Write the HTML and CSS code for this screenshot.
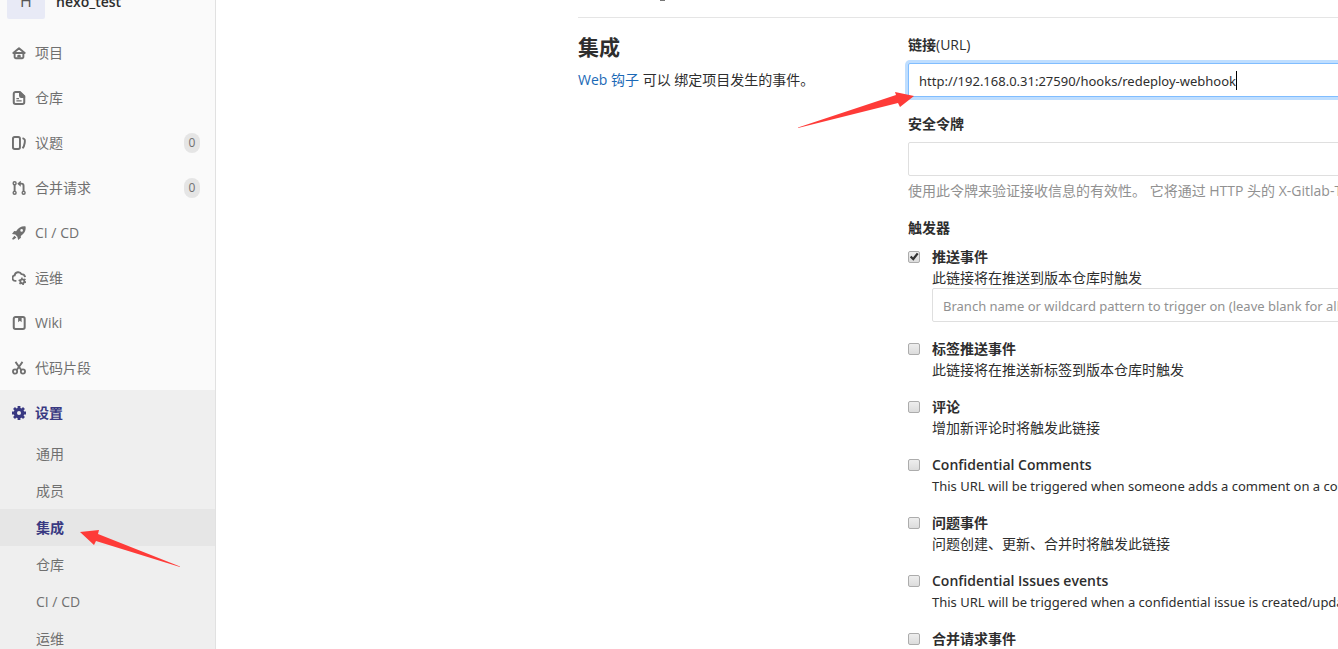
FILE: index.html
```html
<!DOCTYPE html>
<html lang="zh-CN">
<head>
<meta charset="utf-8">
<title>集成 · hexo_test</title>
<link rel="stylesheet" href="styles.css">
</head>
<body>
<div class="page">
  <aside class="sidebar">
    <header class="project"><span class="avatar">H</span><a class="project-name" href="#">hexo_test</a></header>
    <nav>
      <ul class="nav">
        <li><a href="#"><svg class="icon" viewBox="0 0 16 16"><path d="M1.500 8L8 2.500 14.500 8z" fill="none" stroke="currentColor" stroke-width="2.200" stroke-linejoin="round"/><path d="M3 8v4.500A1.500 1.500 0 0 0 4.500 14h7a1.500 1.500 0 0 0 1.500-1.500V8" fill="none" stroke="currentColor" stroke-width="2.200"/><path d="M6 13v-1.500A1.500 1.500 0 0 1 7.500 10h1a1.500 1.500 0 0 1 1.500 1.500V13z"/></svg><span>项目</span></a></li>
        <li><a href="#"><svg class="icon" viewBox="0 0 16 16"><path d="M9 1.200H4A2 2 0 0 0 2 3.200v9.600a2 2 0 0 0 2 2h8a2 2 0 0 0 2-2V6z" fill="none" stroke="currentColor" stroke-width="2.300"/><path d="M8 1h2l5 5v2h-4.500A2.500 2.500 0 0 1 8 5.500zM5 8h3v1.300H5zM5 10.700h6V12H5z"/></svg><span>仓库</span></a></li>
        <li><a href="#"><svg class="icon" viewBox="0 0 16 16"><rect x="1.100" y="1.200" width="8" height="13.600" rx="2" fill="none" stroke="currentColor" stroke-width="2.200"/><path d="M12 2.500c2.800 1 3 1.800 2.500 5.500S13.300 12.700 12 14" fill="none" stroke="currentColor" stroke-width="2.200"/></svg><span>议题</span><span class="count">0</span></a></li>
        <li><a href="#"><svg class="icon" viewBox="0 0 16 16"><g fill="none" stroke="currentColor"><g stroke-width="1.600"><circle cx="3" cy="2.500" r="1.700"/><circle cx="3" cy="13.500" r="1.700"/><circle cx="13.300" cy="13.500" r="1.700"/></g><path d="M3 4.200v7.600M8 3h2.800a2.400 2.400 0 0 1 2.400 2.400v6.400" stroke-width="2.200"/></g><path d="M6 3l4-3.500v7z"/></svg><span>合并请求</span><span class="count">0</span></a></li>
        <li><a href="#"><svg class="icon" viewBox="0 0 16 16"><path fill-rule="evenodd" d="M15.500.500c.5 4-.5 7-4.500 10l-1 .8.200 2.200L7 16l-.8-3.800-2.400-2.400L0 9l2.500-3.200 2.200.2C7.500 2 11 0 15.500.500zM11 3.500a1.500 1.500 0 1 0 0 3 1.500 1.500 0 0 0 0-3z"/><path d="M2.800 11l2.200 2.200L2 15.500H.5V14z"/></svg><span>CI / CD</span></a></li>
        <li><a href="#"><svg class="icon" viewBox="0 0 16 16"><path d="M5 11.300H4A3.200 3.200 0 0 1 3 5C3.600.800 9 .1 10.800 3.600 13 3.600 14.500 4.800 15 7" fill="none" stroke="currentColor" stroke-width="2.200"/><circle cx="11.800" cy="11.800" r="2.300" fill="none" stroke="currentColor" stroke-width="2"/><circle cx="11.800" cy="11.800" r="3.600" fill="none" stroke="currentColor" stroke-width="1.800" stroke-dasharray="1.800 1.970"/></svg><span>运维</span></a></li>
        <li><a href="#"><svg class="icon" viewBox="0 0 16 16"><rect x="2" y="1.200" width="12.500" height="13.600" rx="2" fill="none" stroke="currentColor" stroke-width="2.300"/><path d="M7 1h4v6L9 5.500 7 7z"/></svg><span>Wiki</span></a></li>
        <li><a href="#"><svg class="icon" viewBox="0 0 16 16"><g fill="none" stroke="currentColor" stroke-width="2.100"><circle cx="3.500" cy="12" r="2.400"/><circle cx="12.500" cy="12" r="2.400"/><path d="M4 1l6.800 9.500M12 1L5.200 10.500"/></g></svg><span>代码片段</span></a></li>
      </ul>
      <div class="nav-active">
        <ul class="nav">
          <li><a class="current" href="#"><svg class="icon" viewBox="0 0 16 16"><circle cx="8" cy="8" r="4.200" fill="none" stroke="currentColor" stroke-width="3.800"/><path fill="none" stroke="currentColor" stroke-width="3.200" d="M8 0v3.500M8 12.500V16M0 8h3.500M12.500 8H16M2.300 2.300L5 5M11 11l2.700 2.700M2.300 13.700L5 11M11 5l2.700-2.700"/></svg><span>设置</span></a></li>
        </ul>
        <ul class="subnav">
          <li><a href="#">通用</a></li>
          <li><a href="#">成员</a></li>
          <li><a class="current" href="#">集成</a></li>
          <li><a href="#">仓库</a></li>
          <li><a href="#">CI / CD</a></li>
          <li><a href="#">运维</a></li>
        </ul>
      </div>
    </nav>
  </aside>
  <main class="content">
    <section class="settings">
      <div class="intro">
        <h4>集成</h4>
        <p><a href="#">Web 钩子</a> 可以 绑定项目发生的事件。</p>
      </div>
      <form class="form">
        <div class="group">
          <label for="url">链接<span class="plain">(URL)</span></label>
          <div class="field"><input class="control focused" id="url" type="text" value="http://192.168.0.31:27590/hooks/redeploy-webhook"><span class="caret"></span></div>
        </div>
        <div class="group">
          <label for="token">安全令牌</label>
          <input class="control" id="token" type="text">
          <p class="help">使用此令牌来验证接收信息的有效性。 它将通过 HTTP 头的 X-Gitlab-Token 发送。</p>
        </div>
        <fieldset class="triggers">
          <legend>触发器</legend>
          <div class="trigger"><input type="checkbox" id="push" checked><div><label for="push">推送事件</label><p>此链接将在推送到版本仓库时触发</p><input class="control" type="text" aria-label="Branch" placeholder="Branch name or wildcard pattern to trigger on (leave blank for all)"></div></div>
          <div class="trigger"><input type="checkbox" id="tag"><div><label for="tag">标签推送事件</label><p>此链接将在推送新标签到版本仓库时触发</p></div></div>
          <div class="trigger"><input type="checkbox" id="note"><div><label for="note">评论</label><p>增加新评论时将触发此链接</p></div></div>
          <div class="trigger"><input type="checkbox" id="cnote"><div><label for="cnote">Confidential Comments</label><p class="latin">This URL will be triggered when someone adds a comment on a confidential issue</p></div></div>
          <div class="trigger"><input type="checkbox" id="issue"><div><label for="issue">问题事件</label><p>问题创建、更新、合并时将触发此链接</p></div></div>
          <div class="trigger"><input type="checkbox" id="cissue"><div><label for="cissue">Confidential Issues events</label><p class="latin">This URL will be triggered when a confidential issue is created/updated/merged</p></div></div>
          <div class="trigger"><input type="checkbox" id="merge"><div><label for="merge">合并请求事件</label></div></div>
        </fieldset>
      </form>
    </section>
  </main>
  <svg class="arrow arrow-url" viewBox="0 0 116 36"><path d="M116 4L97 0l1 3L0 35.500v.5l100-25 2 4z"/></svg>
  <svg class="arrow arrow-nav" viewBox="0 0 100 37"><path d="M0 2L19 0l-1 4 82 32.500v.5L16 11l-2 4z"/></svg>
</div>
</body>
</html>
```
FILE: styles.css
```css
* { box-sizing: border-box; }
body {
  margin: 0;
  background: #fff;
  color: #2e2e2e;
  font: 14px/21px "Open Sans", "Noto Sans CJK SC", sans-serif;
}
a { color: #1b69b6; text-decoration: none; }
p, h4, ul, fieldset { margin: 0; padding: 0; }
ul { list-style: none; }
.page {
  position: relative;
  display: flex;
  height: 100vh;
  overflow: hidden;
}
.sidebar {
  flex: 0 0 216px;
  background: #fafafa;
  border-right: 1px solid #e1e1e1;
}
.project {
  display: flex;
  align-items: center;
  gap: 11px;
  height: 40px;
  margin: -20px 0 10px;
  padding-left: 7px;
}
.avatar {
  width: 38px;
  height: 38px;
  border-radius: 2px;
  background: #e8eaf6;
  color: #555;
  font-size: 16px;
  line-height: 40px;
  text-align: center;
}
.project-name { padding-top: 3px; color: #2e2e2e; font-weight: 600; }
.nav a {
  display: flex;
  align-items: center;
  height: 45px;
  padding: 0 15px 0 12px;
  color: #707070;
}
.icon { width: 14px; height: 14px; margin-right: 9px; fill: currentColor; }
.count {
  width: 16px;
  height: 20px;
  margin-left: auto;
  border-radius: 8px;
  background: #e5e5e5;
  font-size: 12px;
  line-height: 20px;
  text-align: center;
}
.nav-active { background: #efefef; }
.nav a.current { color: #393982; font-weight: 600; }
.subnav a {
  display: block;
  padding-left: 36px;
  color: #707070;
  line-height: 37px;
}
.subnav a.current { background: #e6e6e6; color: #393982; font-weight: 600; }
.content { flex: 1; min-width: 0; padding: 17px 0 0 362px; }
.settings {
  display: grid;
  grid-template-columns: 300px minmax(644px, 1fr);
  gap: 30px;
  padding-top: 16px;
  border-top: 1px solid #e5e5e5;
}
h4 { margin-bottom: 8px; font-size: 21px; line-height: 27px; }
.group { margin-bottom: 16px; }
.group label { display: block; margin-bottom: 8px; }
label, legend { font-weight: 600; }
.plain { font-weight: 400; }
.field { position: relative; }
.control {
  display: block;
  width: 100%;
  height: 34px;
  padding: 7px 10px 5px;
  border: 1px solid #dfdfdf;
  border-radius: 2px;
  background: #fff;
  color: #2e2e2e;
  font: 13px/20px "Noto Sans", "Noto Sans CJK SC", sans-serif;
}
.latin { font-family: "Noto Sans", sans-serif; font-size: 13px; line-height: 22px; }
.trigger .latin { margin-bottom: -1px; }
.control::placeholder { color: #919191; opacity: 1; }
.focused { border-color: #80bdff; box-shadow: 0 0 0 3px #bfdeff; }
.caret {
  position: absolute;
  top: 8px;
  left: 328px;
  width: 1px;
  height: 19px;
  background: #000;
}
.help { margin-top: 4px; color: #919191; }
.triggers { border: 0; }
legend { margin-bottom: 8px; padding: 0; }
.trigger {
  display: grid;
  grid-template-columns: 12px 1fr;
  gap: 12px;
  margin-bottom: 16px;
}
.trigger label { display: block; }
input[type="checkbox"] {
  appearance: none;
  width: 12px;
  height: 12px;
  margin: 5px 0 0;
  border: 1px solid #acacac;
  border-radius: 2px;
  background: linear-gradient(#eee, #dcdcdc);
}
input[type="checkbox"]:checked::after {
  content: "";
  display: block;
  width: 10px;
  height: 10px;
  background: #333;
  clip-path: polygon(8% 52%, 25% 38%, 40% 55%, 78% 8%, 96% 20%, 44% 88%);
}
.content::before {
  content: "";
  position: absolute;
  top: 0;
  left: 660px;
  width: 5px;
  height: 1px;
  background: #777;
}
.arrow { position: absolute; fill: #fe3b38; }
.arrow-url { top: 92px; left: 798px; width: 116px; height: 36px; }
.arrow-nav { top: 530px; left: 80px; width: 100px; height: 37px; }
```
